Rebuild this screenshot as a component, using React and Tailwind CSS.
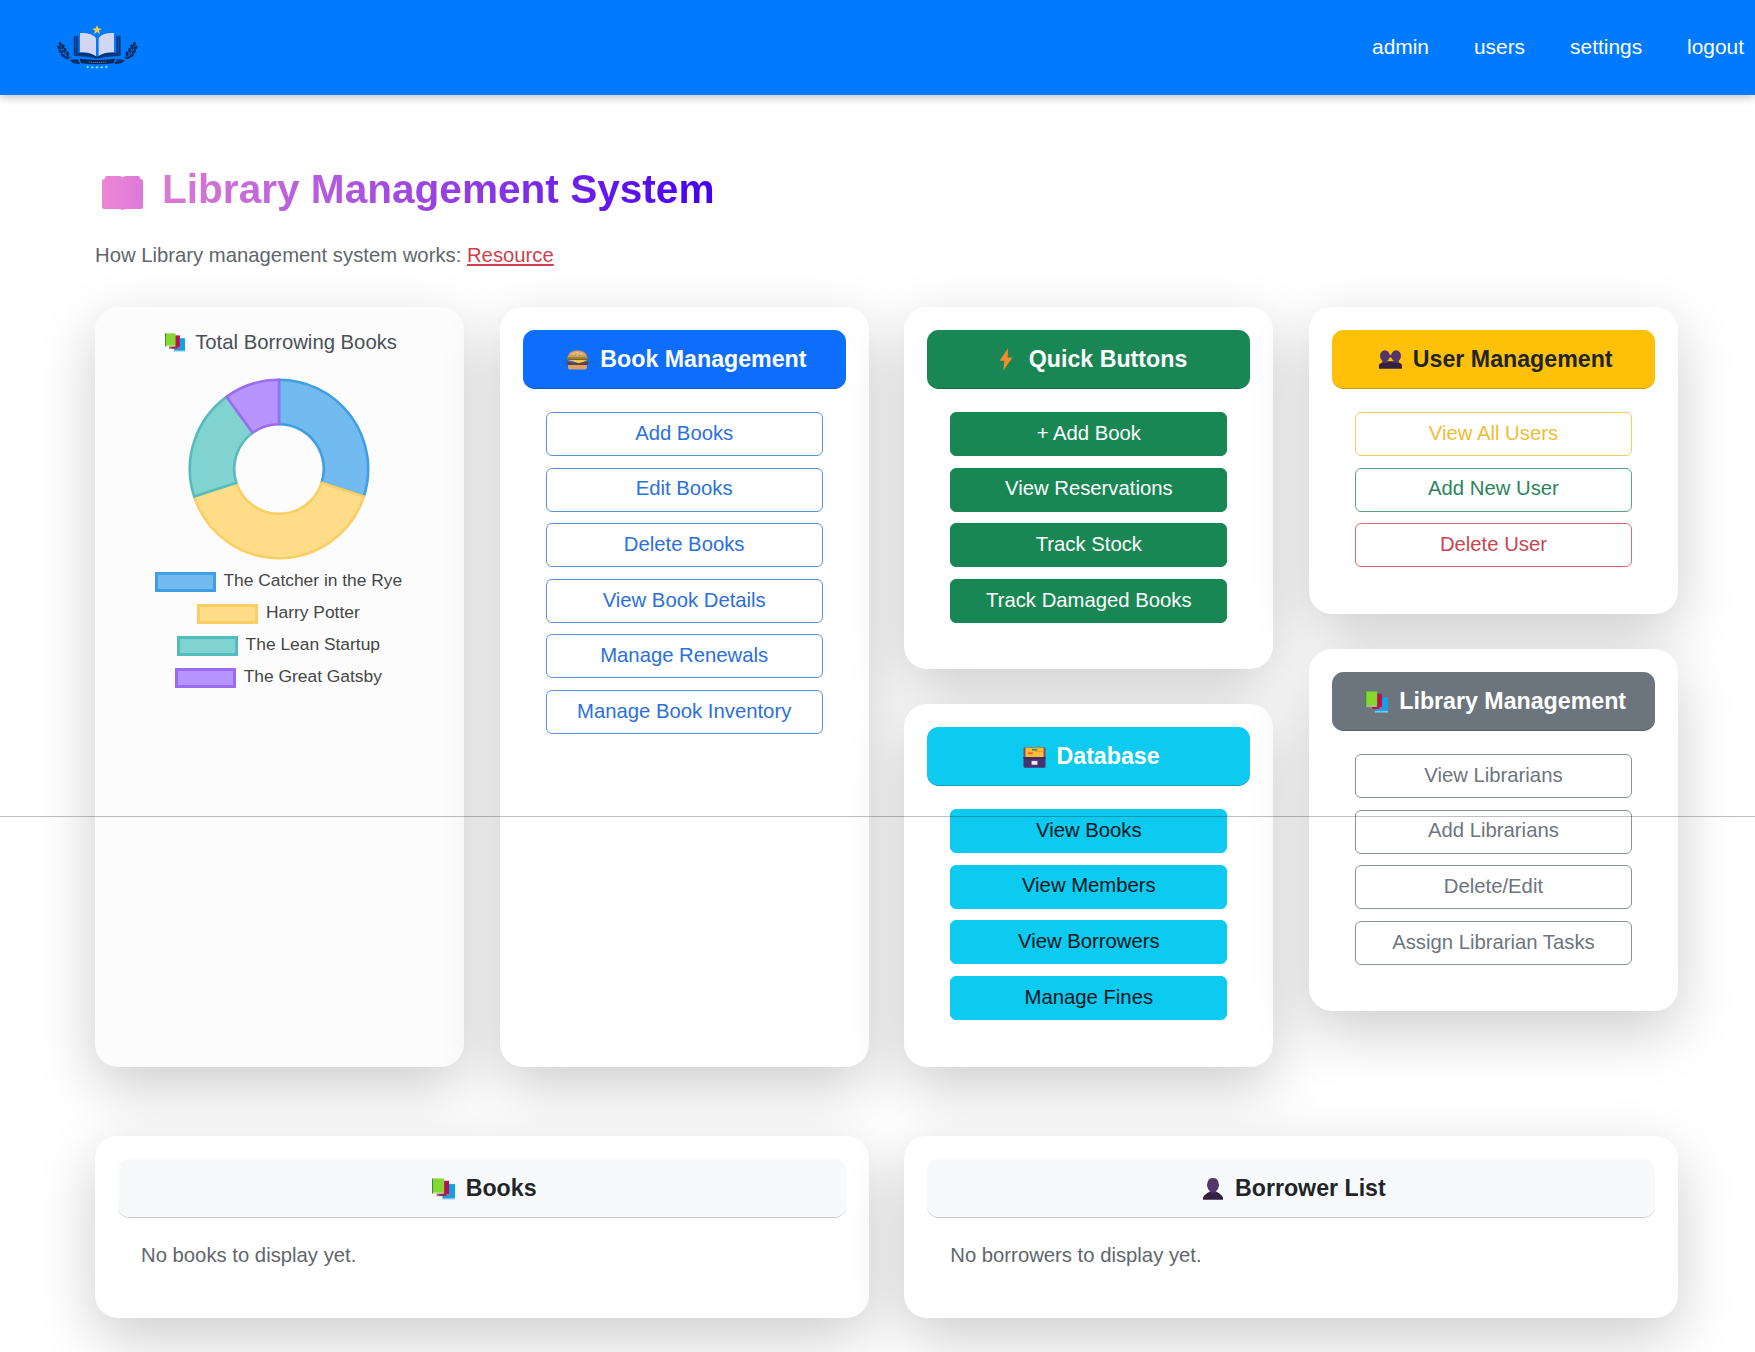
import React from "react";

const SHADOW = "shadow-[0_20px_60px_rgba(0,0,0,0.2)]";

function BooksIcon({ className }) {
  return (
    <svg viewBox="0 0 70 66" className={className}>
      <path d="M30 60h40v5H30z" fill="#8fd0f5" />
      <path d="M32 18h38v43H32z" fill="#159fe4" />
      <path d="M14 44h38v11H14z" fill="#b56b83" />
      <path d="M22 48h22v6H22z" fill="#7d2e55" />
      <path d="M34 8h18v40H34z" fill="#b5134e" />
      <path d="M0 1h5v46H0z" fill="#3f8f35" />
      <path d="M4 1h33v43H4z" fill="#86d72f" />
      <path d="M3 44h34v3H3z" fill="#c8e6a8" />
    </svg>
  );
}

function BurgerIcon({ className }) {
  return (
    <svg viewBox="0 0 70 60" className={className}>
      <path d="M5 24C6 8 18 1 35 1s29 7 30 23z" fill="#d9955a" />
      <path d="M12 14C18 5 27 3 35 3s17 2 23 11z" fill="#e6ab74" />
      <g fill="#f8dfb4">
        <circle cx="22" cy="11" r="2" />
        <circle cx="34" cy="7" r="2" />
        <circle cx="46" cy="11" r="2" />
        <circle cx="34" cy="15" r="2" />
      </g>
      <path d="M4 22h62l1 6-8 4H11l-8-4z" fill="#5c9a2c" />
      <path d="M5 27h60v6H5z" fill="#c33f27" />
      <path d="M5 30h60l-12 5-14 5-14-5z" fill="#ffc83d" />
      <path d="M2 35q17 4 33 4t33-4v7q-2 4-7 4H9q-7 0-7-6z" fill="#6d3f2b" />
      <path d="M6 45h58v6q0 8-9 8H15q-9 0-9-8z" fill="#dba067" />
    </svg>
  );
}

function BoltIcon({ className }) {
  return (
    <svg viewBox="0 0 40 68" className={className}>
      <path d="M26 1 1 38h14l-3 29L39 28H25z" fill="#f58a2c" />
    </svg>
  );
}

function UsersIcon({ className }) {
  return (
    <svg viewBox="0 0 70 56" className={className}>
      <path d="M0 56V46q0-6 9-8l4-5h44l4 5q9 2 9 8v10z" fill="#33213f" />
      <ellipse cx="18" cy="17" rx="15" ry="17" fill="#54366b" />
      <ellipse cx="52" cy="17" rx="15" ry="17" fill="#54366b" />
      <path d="M10 28h16v11H10zM44 28h16v11H44z" fill="#54366b" />
      <path d="M29 14h12v8H29z" fill="#54366b" />
    </svg>
  );
}

function UserIcon({ className }) {
  return (
    <svg viewBox="0 0 60 66" className={className}>
      <path d="M0 65V60q0-6 13-15l9-5h16l9 5q13 9 13 15v5z" fill="#33213f" />
      <path d="M22 32h16v12q-8 6-16 0z" fill="#482e5c" />
      <path d="M13 17Q14 0 30 0t17 17q3 3 0 9-3 15-17 16-14-1-17-16-3-6 0-9z" fill="#54366b" />
    </svg>
  );
}

function FileBoxIcon({ className }) {
  return (
    <svg viewBox="0 0 70 68" className={className}>
      <path d="M38 5q0-4 5-4h10q4 0 4 4z" fill="#22c26b" />
      <path d="M1 8q0-4 5-4h58q5 0 5 4v32H1z" fill="#765060" />
      <path d="M7 5h56v31H7z" fill="#fdbb38" />
      <path d="M27 9h17v5H27z" fill="#2c8a93" />
      <path d="M15 20h15v5H15z" fill="#e5592b" />
      <path d="M36 15h24v3H36z" fill="#ee9f2d" />
      <path d="M1 35h68v28q0 4-4 4H5q-4 0-4-4z" fill="#46346f" />
      <path d="M1 35h68v4H1z" fill="#36235a" />
      <path d="M26 46h18v12H26z" fill="#efe5fb" />
    </svg>
  );
}

function Laurel() {
  return (
    <g fill="#0a2f66">
      <path d="M58 98q8 34 34 46" fill="none" stroke="#0a2f66" strokeWidth="2.5" />
      <ellipse cx="61" cy="102" rx="4.5" ry="7" transform="rotate(-20 61 102)" />
      <ellipse cx="57" cy="113" rx="4.5" ry="7.5" transform="rotate(-45 57 113)" />
      <ellipse cx="69" cy="110" rx="4.5" ry="7.5" transform="rotate(15 69 110)" />
      <ellipse cx="62" cy="125" rx="4.5" ry="7.5" transform="rotate(-55 62 125)" />
      <ellipse cx="75" cy="121" rx="4.5" ry="7.5" transform="rotate(5 75 121)" />
      <ellipse cx="69" cy="136" rx="4.5" ry="7.5" transform="rotate(-62 69 136)" />
      <ellipse cx="83" cy="131" rx="4.5" ry="7.5" transform="rotate(-5 83 131)" />
      <ellipse cx="80" cy="143" rx="4" ry="8" transform="rotate(-72 80 143)" />
    </g>
  );
}

function Logo() {
  return (
    <svg viewBox="45 42 255 144" className="h-12 w-[85px]" aria-label="Library logo">
      <path d="m171 46 4 9 10 1-8 6 3 10-9-6-9 6 3-10-8-6 10-1z" fill="#f2cf3b" />
      <path d="M101 79h14v53q34-4 54 10v4q-30-8-68-8z" fill="#0a3a80" />
      <path d="M242 79h-14v53q-34-4-54 10v4q30-8 68-8z" fill="#0a3a80" />
      <path d="M107 76v58M113 73v58M236 76v58M230 73v58" stroke="#0a56b8" strokeWidth="2" />
      <path d="M120 69q34-2 48 15v55q-18-14-48-12z" fill="#d3d6f3" />
      <path d="M222 69q-34-2-46 15v55q16-14 46-12z" fill="#d3d6f3" />
      <path d="M115 131q32-3 56 12 24-15 57-12" fill="none" stroke="#0a2f66" strokeWidth="4" />
      <Laurel />
      <g transform="translate(344 0) scale(-1 1)">
        <Laurel />
      </g>
      <path d="m89 150 24-3 8 16-22-3zM255 150l-24-3-8 16 22-3z" fill="#0a2f66" />
      <path d="M119 146q53 8 106 0l-4 14q-49 6-98 0z" fill="#082652" />
      <path d="M146 156q26 3 52 0" fill="none" stroke="#7d94bd" strokeWidth="2.5" strokeDasharray="4 2" />
      <g fill="#8fd3cf">
        <circle cx="143" cy="171" r="3.5" />
        <circle cx="157" cy="172" r="3.5" />
        <circle cx="171" cy="172" r="3.5" />
        <circle cx="185" cy="172" r="3.5" />
        <circle cx="199" cy="171" r="3.5" />
      </g>
    </svg>
  );
}

const SLICES = [
  { label: "The Catcher in the Rye", value: 30, fill: "#72bbf0", stroke: "#3f9fe0", box: "bg-[#72bbf0] border-[#3f9fe0]" },
  { label: "Harry Potter", value: 40, fill: "#fedc88", stroke: "#fbce63", box: "bg-[#fedc88] border-[#fbce63]" },
  { label: "The Lean Startup", value: 20, fill: "#81d3d2", stroke: "#55bcbb", box: "bg-[#81d3d2] border-[#55bcbb]" },
  { label: "The Great Gatsby", value: 10, fill: "#b794ff", stroke: "#9a6cf0", box: "bg-[#b794ff] border-[#9a6cf0]" },
];

function Donut() {
  const outer = 89.2;
  const inner = 44.8;
  const point = (r, t) => {
    const a = t * 2 * Math.PI - Math.PI / 2;
    return `${(r * Math.cos(a)).toFixed(2)} ${(r * Math.sin(a)).toFixed(2)}`;
  };
  let start = 0;
  return (
    <svg viewBox="-91 -91 182 182" className="h-[182px] w-[182px]">
      {SLICES.map((s) => {
        const a = start;
        const b = start + s.value / 100;
        start = b;
        return (
          <path
            key={s.label}
            d={`M${point(outer, a)}A${outer} ${outer} 0 0 1 ${point(outer, b)}L${point(inner, b)}A${inner} ${inner} 0 0 0 ${point(inner, a)}Z`}
            fill={s.fill}
            stroke={s.stroke}
            strokeWidth="2.6"
            strokeLinejoin="round"
          />
        );
      })}
    </svg>
  );
}

function Card({ className = "", children }) {
  return <section className={`rounded-[23px] p-[23px] ${SHADOW} ${className}`}>{children}</section>;
}

function CardHeader({ icon, title, className }) {
  return (
    <h2
      className={`flex h-[58.5px] items-center justify-center gap-[6.5px] rounded-[11.6px] border-b border-black/20 pt-[1px] text-[23.2px] leading-none font-bold whitespace-nowrap ${className}`}
    >
      <span className="flex w-8 justify-center pt-[1px]">{icon}</span>
      {title}
    </h2>
  );
}

function ButtonList({ items }) {
  return (
    <div className="flex flex-col gap-[11.6px] px-[23px] pt-[23.5px] pb-[34.5px]">
      {items.map(([label, style]) => (
        <button
          key={label}
          className={`h-[44px] rounded-[6px] border pb-[2px] text-[20.3px] leading-none whitespace-nowrap ${style}`}
        >
          {label}
        </button>
      ))}
    </div>
  );
}

const outlineBlue = "border-[#5a92e0] text-[#2b70dc]";
const solidGreen = "border-[#198754] bg-[#198754] text-white";
const solidCyan = "border-[#0dcaf0] bg-[#0dcaf0] text-[#03161b]";
const outlineGray = "border-[#8b9299] text-[#6c757d]";

export default function App() {
  return (
    <div className="relative h-[1352px] w-[1755px] overflow-hidden bg-white font-['Liberation_Sans',Arial,sans-serif] text-[20.3px] text-[#212529]">
      <header className="flex h-[95px] items-center justify-between bg-[#007bff] pr-[11px] pl-[55px] shadow-[0_3px_8px_rgba(0,0,0,0.22)]">
        <Logo />
        <nav className="flex gap-[45px] pb-[2px] text-[20.9px] text-white">
          <a>admin</a>
          <a>users</a>
          <a>settings</a>
          <a>logout</a>
        </nav>
      </header>

      <main className="ml-[95px] w-[1583px] pt-[70px]">
        <h1 className="flex h-12 items-center text-[40.6px] leading-[50px] font-bold">
          <span className="flex w-[67px] pt-[7px] pl-[7px]">
            <svg viewBox="0 0 41 35" className="h-[35px] w-[41px]">
              <defs>
                <linearGradient id="cover" x1="0" x2="1" y1="0" y2="0">
                  <stop offset="0" stopColor="#ec86d4" />
                  <stop offset="1" stopColor="#dc7ad8" />
                </linearGradient>
              </defs>
              <path
                d="M5 1h12q3 0 3.5 1.5Q21 1 24 1h12q2 0 2.5 3 2.5 0 2.5 3v25q0 2-2 2H23l-2.5 1.3L18 34H2q-2 0-2-2V7q0-3 2.5-3Q3 1 5 1z"
                fill="url(#cover)"
              />
            </svg>
          </span>
          <span className="bg-linear-[90deg,#d97bd2_0%,#b45ae0_30%,#8a35e4_60%,#6418ee_80%,#4400ee_100%] bg-clip-text pb-[1px] whitespace-nowrap text-transparent">
            Library Management System
          </span>
        </h1>
        <p className="mt-7 h-[30px] leading-[29px] text-[#5f666c]">
          How Library management system works:{" "}
          <a className="text-[#cf3f4d] underline decoration-2 underline-offset-2">Resource</a>
        </p>

        <div className="mt-9 grid grid-cols-4 gap-[35.5px]">
          <Card className="h-[759.5px] bg-[#fcfcfc]">
            <h2 className="flex h-6 items-center justify-center gap-[6px] pr-[1px] leading-none text-[#495057]">
              <span className="flex w-7 justify-center">
                <BooksIcon className="h-[19px] w-[20px]" />
              </span>
              Total Borrowing Books
            </h2>
            <div className="mt-[23.5px] flex justify-center pr-[1px]">
              <Donut />
            </div>
            <ul className="mt-[12px] flex flex-col gap-[11.5px] pr-[2px]">
              {SLICES.map((s) => (
                <li key={s.label} className="flex h-[20.5px] items-center justify-center gap-[7.5px]">
                  <span className={`h-[20.5px] w-[61px] border-[3px] ${s.box}`} />
                  <span className="pb-[3px] text-[17.4px] leading-none text-[#454545]">{s.label}</span>
                </li>
              ))}
            </ul>
          </Card>

          <Card className="h-[759.5px] bg-white">
            <CardHeader
              icon={<BurgerIcon className="h-[20px] w-[23px]" />}
              title="Book Management"
              className="bg-[#0d6efd] text-white"
            />
            <ButtonList
              items={[
                ["Add Books", outlineBlue],
                ["Edit Books", outlineBlue],
                ["Delete Books", outlineBlue],
                ["View Book Details", outlineBlue],
                ["Manage Renewals", outlineBlue],
                ["Manage Book Inventory", outlineBlue],
              ]}
            />
          </Card>

          <div className="flex flex-col gap-[35px]">
            <Card className="h-[362px] bg-white">
              <CardHeader
                icon={<BoltIcon className="h-[23px] w-[14px]" />}
                title="Quick Buttons"
                className="bg-[#198754] text-white"
              />
              <ButtonList
                items={[
                  ["+ Add Book", solidGreen],
                  ["View Reservations", solidGreen],
                  ["Track Stock", solidGreen],
                  ["Track Damaged Books", solidGreen],
                ]}
              />
            </Card>
            <Card className="h-[362.5px] bg-white">
              <CardHeader
                icon={<FileBoxIcon className="h-[22px] w-[23px]" />}
                title="Database"
                className="bg-[#0dcaf0] text-white"
              />
              <ButtonList
                items={[
                  ["View Books", solidCyan],
                  ["View Members", solidCyan],
                  ["View Borrowers", solidCyan],
                  ["Manage Fines", solidCyan],
                ]}
              />
            </Card>
          </div>

          <div className="flex flex-col gap-[35.5px]">
            <Card className="h-[306.5px] bg-white">
              <CardHeader
                icon={<UsersIcon className="h-[19px] w-[23px]" />}
                title="User Management"
                className="bg-[#ffc107] text-[#212529]"
              />
              <ButtonList
                items={[
                  ["View All Users", "border-[#f3cd5c] text-[#efbd35]"],
                  ["Add New User", "border-[#5aa583] text-[#2a855b]"],
                  ["Delete User", "border-[#db6873] text-[#cb4452]"],
                ]}
              />
            </Card>
            <Card className="h-[362px] bg-white">
              <CardHeader
                icon={<BooksIcon className="h-[22px] w-[23px]" />}
                title="Library Management"
                className="bg-[#6c757d] text-white"
              />
              <ButtonList
                items={[
                  ["View Librarians", outlineGray],
                  ["Add Librarians", outlineGray],
                  ["Delete/Edit", outlineGray],
                  ["Assign Librarian Tasks", outlineGray],
                ]}
              />
            </Card>
          </div>
        </div>

        <div className="mt-[69.5px] grid grid-cols-2 gap-[35.5px]">
          <Card className="h-[182px] bg-white">
            <CardHeader
              icon={<BooksIcon className="h-[22px] w-[23px]" />}
              title="Books"
              className="bg-[#f8f9fa]"
            />
            <p className="px-[23px] pt-[22px] leading-[30px] text-[#5f666c]">No books to display yet.</p>
          </Card>
          <Card className="h-[182px] bg-white">
            <CardHeader
              icon={<UserIcon className="h-[22px] w-[20px]" />}
              title="Borrower List"
              className="bg-[#f8f9fa]"
            />
            <p className="px-[23px] pt-[22px] leading-[30px] text-[#5f666c]">No borrowers to display yet.</p>
          </Card>
        </div>
      </main>

      <div className="absolute top-[816px] left-0 h-px w-full bg-black/25" />
    </div>
  );
}
